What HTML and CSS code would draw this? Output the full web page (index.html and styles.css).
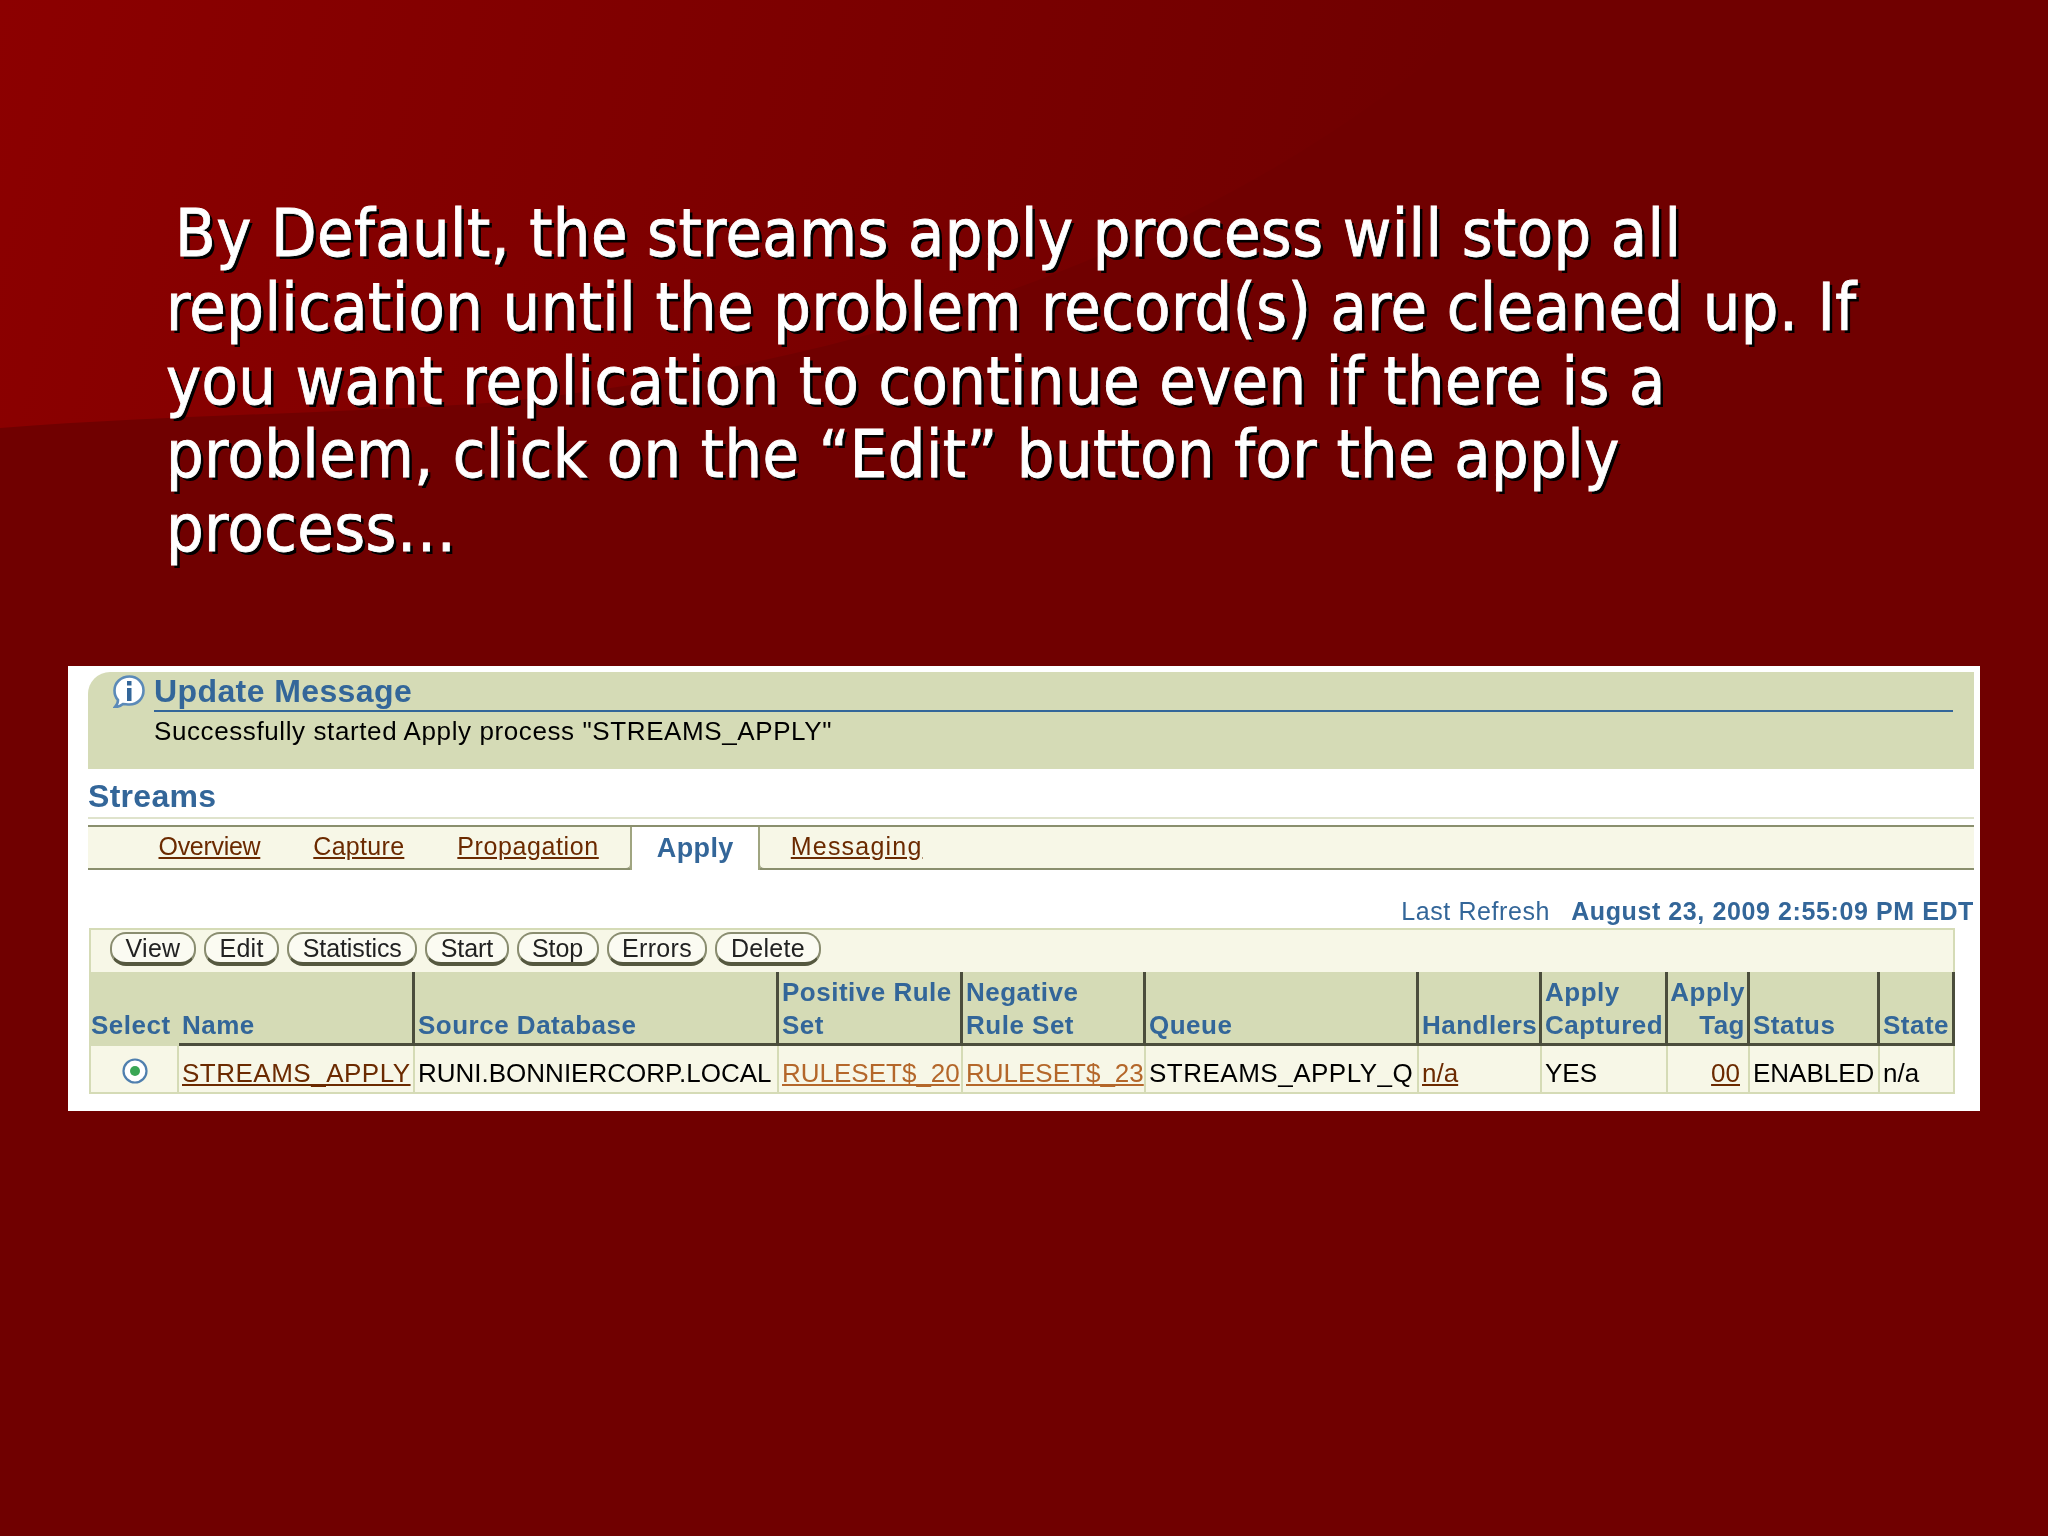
FILE: index.html
```html
<!DOCTYPE html>
<html lang="en">
<head>
<meta charset="utf-8">
<title>Streams apply process</title>
<link rel="stylesheet" href="styles.css">
</head>
<body>
<main class="slide">
  <svg class="wedge" viewBox="0 0 2048 1536" width="2048" height="1536" aria-hidden="true">
    <defs>
      <linearGradient id="wg" gradientUnits="userSpaceOnUse" x1="0" y1="0" x2="1400" y2="300">
        <stop offset="0" stop-color="#8c0000"/>
        <stop offset="1" stop-color="#700000"/>
      </linearGradient>
    </defs>
    <path d="M0 428C180 414 340 414 500 402C800 370 1200 280 1500 0L0 0Z" fill="url(#wg)"/>
  </svg>
  <p class="lead">By Default, the streams apply process will stop all replication until the problem record(s) are cleaned up. If you want replication to continue even if there is a problem, click on the “Edit” button for the apply process…</p>
  <section class="shot">
    <div class="msg">
      <svg class="info" viewBox="0 0 32 33" width="32" height="33" aria-hidden="true">
        <path d="M2 32C4 30 5 28 5 25C2 22 1.500 19 1.500 15.500C1.500 7.500 8 1.500 16.500 1.500C24.500 1.500 30.500 7.500 30.500 15.500C30.500 23.500 24.500 29.500 16.500 29.500C14 29.500 12 29 10 29C7.500 31 5 32 2 32Z" fill="#fff" stroke="#5b8ab8" stroke-width="2.600"/>
        <rect x="14" y="6" width="4.500" height="4.500" fill="#336699"/>
        <rect x="14" y="13" width="4.500" height="13" fill="#336699"/>
      </svg>
      <h2 class="msg-title">Update Message</h2>
      <p class="msg-text">Successfully started Apply process "STREAMS_APPLY"</p>
    </div>
    <h1 class="heading">Streams</h1>
    <nav class="tabs">
      <a class="tab tab-tight">Overview</a>
      <a class="tab tab-mid">Capture</a>
      <a class="tab tab-loose">Propagation</a>
      <span class="tab tab-active">Apply</span>
      <a class="tab tab-looser">Messaging</a>
    </nav>
    <div class="refresh"><span class="refresh-label">Last Refresh</span><span class="refresh-date">August 23, 2009 2:55:09 PM EDT</span></div>
    <div class="toolbar">
      <span class="btn">View</span>
      <span class="btn">Edit</span>
      <span class="btn btn-narrow">Statistics</span>
      <span class="btn btn-narrow">Start</span>
      <span class="btn btn-narrow">Stop</span>
      <span class="btn">Errors</span>
      <span class="btn">Delete</span>
    </div>
    <div class="grid">
      <div class="th th-select">Select</div>
      <div class="th">Name</div>
      <div class="th">Source Database</div>
      <div class="th">Positive Rule<br>Set</div>
      <div class="th">Negative<br>Rule Set</div>
      <div class="th">Queue</div>
      <div class="th">Handlers</div>
      <div class="th">Apply<br>Captured</div>
      <div class="th th-right">Apply<br>Tag</div>
      <div class="th">Status</div>
      <div class="th">State</div>

      <div class="td td-select">
        <svg viewBox="0 0 26 26" width="26" height="26" aria-hidden="true">
          <circle cx="13" cy="13" r="11.500" fill="#fff" stroke="#4f7fae" stroke-width="2.200"/>
          <circle cx="13" cy="13" r="5" fill="#3aa655"/>
        </svg>
      </div>
      <div class="td td-wide"><a class="link">STREAMS_APPLY</a></div>
      <div class="td">RUNI.BONNIERCORP.LOCAL</div>
      <div class="td"><a class="link link-rule">RULESET$_20</a></div>
      <div class="td"><a class="link link-rule">RULESET$_23</a></div>
      <div class="td td-wide">STREAMS_APPLY_Q</div>
      <div class="td"><a class="link">n/a</a></div>
      <div class="td">YES</div>
      <div class="td td-right"><a class="link">00</a></div>
      <div class="td">ENABLED</div>
      <div class="td">n/a</div>
    </div>
  </section>
</main>
</body>
</html>
```
FILE: styles.css
```css
html, body { margin: 0; padding: 0; background: #700000; }
.slide {
  position: relative;
  width: 2048px;
  height: 1536px;
  overflow: hidden;
  background: #700000;
  font-family: "Liberation Sans", Arial, sans-serif;
  padding-top: 197px;
  box-sizing: border-box;
}
.wedge { position: absolute; left: 0; top: 0; }
.lead {
  position: relative;
  margin: 0 150px 100px 166px;
  height: 369px;
  font-family: "DejaVu Sans", sans-serif;
  font-stretch: condensed;
  font-size: 66px;
  line-height: 73.8px;
  letter-spacing: 0.4px;
  color: #fff;
  text-indent: 9px;
  text-shadow: 3px 3px 0 #000;
  -webkit-text-stroke: 0.8px #fff;
}
.shot {
  position: relative;
  margin-left: 68px;
  width: 1912px;
  height: 445px;
  box-sizing: border-box;
  padding-top: 6px;
  background: #fff;
  color: #000;
  font-size: 26px;
  line-height: 33px;
  filter: blur(0.5px);
}
.msg {
  position: relative;
  margin-left: 20px;
  width: 1886px;
  height: 97px;
  box-sizing: border-box;
  padding: 0 21px 0 66px;
  background: #d5dbb6;
  border-top-left-radius: 22px;
}
.info { position: absolute; left: 25px; top: 3px; }
.msg-title {
  margin: 0;
  height: 38px;
  border-bottom: 2px solid #336699;
  font-size: 32px;
  line-height: 38px;
  letter-spacing: 0.4px;
  font-weight: 700;
  color: #336699;
}
.msg-text {
  margin: 3px 0 0;
  font-size: 26px;
  line-height: 33px;
  letter-spacing: 0.6px;
}
.heading {
  margin: 8px 0 0 20px;
  height: 40px;
  width: 1886px;
  font-size: 32px;
  line-height: 38px;
  letter-spacing: 0.3px;
  font-weight: 700;
  color: #336699;
  border-bottom: 2px solid #dfe3cc;
}
.tabs {
  display: flex;
  align-items: stretch;
  box-sizing: border-box;
  margin: 6px 0 0 20px;
  width: 1886px;
  height: 45px;
  padding-left: 44px;
  background: #f7f7e7;
  border-top: 2px solid #8a8f6e;
  border-bottom: 2px solid #8a8f6e;
}
.tab {
  padding: 0 26.5px;
  font-size: 25px;
  line-height: 38px;
  color: #6b2a00;
  text-decoration: underline;
}
.tab-tight { letter-spacing: -0.3px; }
.tab-mid { letter-spacing: 0.3px; }
.tab-loose { letter-spacing: 0.6px; }
.tab-looser { letter-spacing: 1.2px; }
.tab-active {
  position: relative;
  box-sizing: border-box;
  width: 130px;
  height: 43px;
  margin: 0 4px -2px 5px;
  padding: 2px 0 0;
  text-align: center;
  background: #fff;
  border-left: 2px solid #a0a580;
  border-right: 2px solid #a0a580;
  font-size: 27px;
  letter-spacing: 0.4px;
  font-weight: 700;
  color: #336699;
  text-decoration: none;
}
.tab-active::before,
.tab-active::after {
  content: "";
  position: absolute;
  bottom: 0;
  box-sizing: border-box;
  width: 9px;
  height: 9px;
  background: #f7f7e7;
  border-bottom: 2px solid #8a8f6e;
}
.tab-active::before {
  left: -9px;
  border-right: 2px solid #a0a580;
  border-bottom-right-radius: 6px;
}
.tab-active::after {
  right: -9px;
  border-left: 2px solid #a0a580;
  border-bottom-left-radius: 6px;
}
.refresh {
  display: flex;
  justify-content: flex-end;
  gap: 21px;
  margin: 26px 0 0 20px;
  width: 1886px;
  height: 32px;
  font-size: 25px;
  line-height: 31px;
  letter-spacing: 0.6px;
  color: #336699;
}
.refresh-date { font-weight: 700; }
.toolbar {
  display: flex;
  align-items: center;
  gap: 8px;
  box-sizing: border-box;
  margin-left: 21px;
  width: 1866px;
  height: 44px;
  padding: 0 0 4px 19px;
  background: #f7f7e7;
  border: 2px solid #d5dbb6;
  border-bottom: 0;
}
.btn {
  box-sizing: border-box;
  height: 34px;
  padding: 0 13.5px;
  font-size: 25px;
  line-height: 29px;
  letter-spacing: 0.3px;
  color: #222;
  background: #fbfbf2;
  border: 2px solid #8a8d70;
  border-bottom: 4px solid #55583f;
  border-radius: 16px;
}
.btn-narrow { letter-spacing: -0.1px; }
.grid {
  display: grid;
  grid-template-columns: 90px 236px 364px 184px 183px 273px 123px 126px 82px 130px 75px;
  grid-template-rows: 74px 48px;
  margin-left: 21px;
  width: 1866px;
}
.th {
  display: flex;
  align-items: flex-end;
  box-sizing: border-box;
  padding: 0 2px 1px 3px;
  background: #d5dbb6;
  border-right: 3px solid #4b4d3c;
  border-bottom: 3px solid #4b4d3c;
  font-weight: 700;
  font-size: 26px;
  line-height: 33px;
  letter-spacing: 0.5px;
  color: #336699;
  white-space: nowrap;
}
.th-select { border-color: #d5dbb6; padding-left: 2px; }
.th-right { justify-content: flex-end; text-align: right; }
.td {
  box-sizing: border-box;
  padding: 11px 0 0 3px;
  background: #f7f7e7;
  border-right: 2px solid #d5dbb6;
  border-bottom: 2px solid #d5dbb6;
  font-size: 26px;
  line-height: 33px;
  white-space: nowrap;
}
.td-wide { letter-spacing: 0.5px; }
.td-select {
  display: flex;
  align-items: center;
  justify-content: center;
  padding: 3px 0 0 2px;
  border-left: 2px solid #d5dbb6;
}
.td-right { text-align: right; padding-right: 8px; }
.link { color: #6b2a00; text-decoration: underline; }
.link-rule { color: #b4672a; }
```
